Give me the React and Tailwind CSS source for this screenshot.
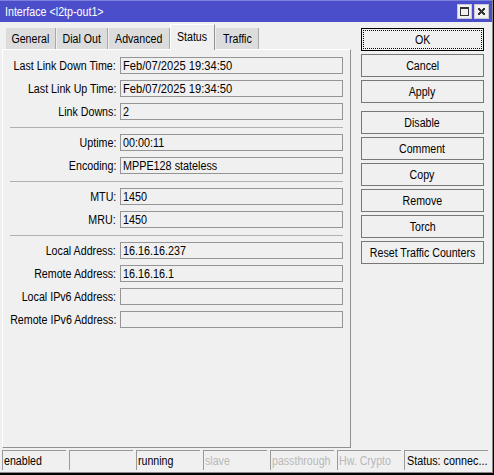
const FIELD_GROUPS = [
  [
    { label: 'Last Link Down Time:', value: 'Feb/07/2025 19:34:50', wide: true },
    { label: 'Last Link Up Time:', value: 'Feb/07/2025 19:34:50', wide: true },
    { label: 'Link Downs:', value: '2' },
  ],
  [
    { label: 'Uptime:', value: '00:00:11' },
    { label: 'Encoding:', value: 'MPPE128 stateless' },
  ],
  [
    { label: 'MTU:', value: '1450' },
    { label: 'MRU:', value: '1450' },
  ],
  [
    { label: 'Local Address:', value: '16.16.16.237' },
    { label: 'Remote Address:', value: '16.16.16.1' },
    { label: 'Local IPv6 Address:', value: '' },
    { label: 'Remote IPv6 Address:', value: '' },
  ],
];

const TABS = [
  { name: 'General', size: 'w-[50px]' },
  { name: 'Dial Out', size: 'w-[51px]' },
  { name: 'Advanced', size: 'w-[61px]' },
  { name: 'Status', size: 'w-[45px]' },
  { name: 'Traffic', size: 'w-[43px]' },
];

const STATUS_CELLS = [
  { text: 'enabled', active: true },
  { text: '', active: true },
  { text: 'running', active: true },
  { text: 'slave', active: false },
  { text: 'passthrough', active: false },
  { text: 'Hw. Crypto', active: false },
];

// Slightly condensed text, close to the old system UI face
function Label({ children, origin = 'origin-left', scale = 'scale-x-[0.885]' }) {
  return <span className={`inline-block whitespace-nowrap ${scale} ${origin}`}>{children}</span>;
}

function TitleBar() {
  return (
    <div className="flex h-[22px] items-center justify-between border-t border-[#7c80dc] bg-[#4b4ecb] pl-[5px] pr-[3px] text-white">
      <Label scale="scale-x-[0.89]">Interface &lt;l2tp-out1&gt;</Label>
      <div className="flex gap-[2px]">
        <button type="button" className="flex h-[15px] w-[15px] items-center justify-center border border-[#c9c9d6] bg-[#f0f0f0]">
          <svg width="9" height="9" viewBox="0 0 9 9" shapeRendering="crispEdges">
            <path d="M0 0h9v9H0zM1 2v6h7V2z" fill="#333" fillRule="evenodd" />
          </svg>
        </button>
        <button type="button" className="flex h-[15px] w-[15px] items-center justify-center border border-[#c9c9d6] bg-[#f0f0f0]">
          <svg width="9" height="9" viewBox="0 0 9 9" shapeRendering="crispEdges">
            <path
              d="M1 1h2v1h1v1h1V2h1V1h2v2H7v1H6v1h1v1h1v2H6V7H5V6H4v1H3v1H1V6h1V5h1V4H2V3H1z"
              fill="#333"
            />
          </svg>
        </button>
      </div>
    </div>
  );
}

function Tabs() {
  return (
    <div className="flex h-[25px] items-end gap-px pl-1">
      {TABS.map(({ name, size }) =>
        name === 'Status' ? (
          <button
            key={name}
            type="button"
            className={`-ml-px -mb-px flex h-[26px] ${size} items-center justify-center border-t border-l border-r border-t-white border-l-white border-r-[#909090] bg-[#f0f0f0] pb-px`}
          >
            <Label origin="origin-center">{name}</Label>
          </button>
        ) : (
          <button
            key={name}
            type="button"
            className={`flex h-[21px] ${size} items-center justify-center border-r border-[#a8a8a8] bg-[#dcdcdc]`}
          >
            <Label origin="origin-center">{name}</Label>
          </button>
        )
      )}
    </div>
  );
}

function Field({ label, value, wide }) {
  return (
    <div className="flex h-[17px] items-center">
      <div className="flex w-[113px] justify-end">
        <Label origin="origin-right" scale="scale-x-[0.89]">
          {label}
        </Label>
      </div>
      <div className="ml-1 flex h-[17px] w-[223px] items-center border border-[#959595] pl-[2px]">
        <Label scale={wide ? 'scale-x-[0.93]' : 'scale-x-[0.9]'}>{value}</Label>
      </div>
    </div>
  );
}

function ActionButton({ children, primary }) {
  return (
    <button
      type="button"
      className={`flex h-[23px] w-[123px] items-center justify-center border ${
        primary ? 'border-black p-px' : 'border-[#777]'
      }`}
    >
      <span className={`flex h-full w-full items-center justify-center ${primary ? 'border border-dotted border-black' : ''}`}>
        <Label origin="origin-center">{children}</Label>
      </span>
    </button>
  );
}

export default function App() {
  return (
    <div className="h-[475px] w-[494px] overflow-hidden border-r border-b-2 border-black">
      <div className="flex h-[473px] flex-col border-r border-b border-[#8a8a8a] bg-[#f0f0f0] font-['Liberation_Sans',Arial,sans-serif] text-[12px] leading-[14px] text-black">
        <TitleBar />
        <div className="flex pl-[2px]">
          <div className="w-[349px] pt-[2px]">
            <Tabs />
            <div className="h-[399px] border border-t-white border-l-white border-r-[#909090] border-b-[#909090] pt-[7px]">
              {FIELD_GROUPS.map((group, i) => (
                <div key={i}>
                  {i > 0 && <div className="mt-[7px] mb-[6px] ml-[7px] w-[333px] border-t border-[#b0b0b0]" />}
                  <div className="flex flex-col gap-[6px]">
                    {group.map((field) => (
                      <Field key={field.label} {...field} />
                    ))}
                  </div>
                </div>
              ))}
            </div>
          </div>
          <div className="ml-[10px] flex flex-col gap-[3px] pt-[6px]">
            <ActionButton primary>OK</ActionButton>
            <ActionButton>Cancel</ActionButton>
            <ActionButton>Apply</ActionButton>
            <div className="mt-[5px] flex flex-col gap-[3px]">
              <ActionButton>Disable</ActionButton>
              <ActionButton>Comment</ActionButton>
              <ActionButton>Copy</ActionButton>
              <ActionButton>Remove</ActionButton>
              <ActionButton>Torch</ActionButton>
              <ActionButton>Reset Traffic Counters</ActionButton>
            </div>
          </div>
        </div>
        <div className="mt-[2px] flex gap-[3px] pl-[2px]">
          {STATUS_CELLS.map(({ text, active }, i) => (
            <div
              key={i}
              className={`flex h-[20px] w-16 items-center border-t border-l border-[#999] pl-px ${active ? '' : 'text-[#b8b8b8]'}`}
            >
              <Label>{text}</Label>
            </div>
          ))}
          <div className="flex h-[20px] w-[84px] items-center border-t border-l border-[#999] pl-[2px]">
            <Label scale="scale-x-[0.9]">Status: connec...</Label>
          </div>
        </div>
      </div>
    </div>
  );
}
